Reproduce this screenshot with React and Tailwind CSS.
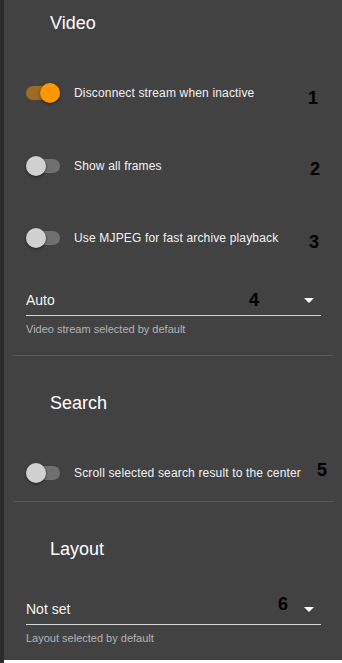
import React, { useState } from 'react';

const Toggle = ({ on, onClick }) => (
  <button
    type="button"
    onClick={onClick}
    className="relative w-[34px] h-[20px] shrink-0 flex items-center"
  >
    <span
      className={`block w-[34px] h-[14px] rounded-full ${on ? 'bg-[#9e6a24]' : 'bg-[#707070]'}`}
    />
    <span
      className={`absolute top-0 w-[20px] h-[20px] rounded-full shadow-[0_1px_3px_rgba(0,0,0,0.5)] ${
        on ? 'left-[14px] bg-[#ff9800]' : 'left-0 bg-[#d0d0d0]'
      }`}
    />
  </button>
);

const ToggleRow = ({ label, on, onClick, className }) => (
  <div className={`h-[40px] flex items-center pl-[12px] ${className}`}>
    <Toggle on={on} onClick={onClick} />
    <span className="ml-[14px] text-[12px] tracking-[0.16px] text-[#f2f2f2]">{label}</span>
  </div>
);

const SelectField = ({ value, helper, className }) => (
  <div className={`pl-[12px] pr-[12px] ${className}`}>
    <div className="h-[30px] flex items-center justify-between border-b border-[#d4d4d4]">
      <span className="text-[14px] text-[#f4f4f4]">{value}</span>
      <svg width="10" height="5" viewBox="0 0 10 5" className="mr-[7px]">
        <path d="M0 0h10L5 5z" fill="#ffffff" />
      </svg>
    </div>
    <div className="mt-[6px] h-[14px] leading-[14px] text-[11px] text-[#b4b4b4]">{helper}</div>
  </div>
);

const Title = ({ children, className }) => (
  <h2 className={`pl-[36px] h-[24px] leading-[24px] text-[18px] text-white ${className}`}>{children}</h2>
);

// black annotation numbers laid over the panel
const Num = ({ n, className }) => (
  <span className={`absolute text-[18px] leading-[18px] font-bold text-black ${className}`}>{n}</span>
);

export default function App() {
  const [toggles, setToggles] = useState([true, false, false, false]);
  const flip = (i) => setToggles((t) => t.map((v, j) => (j === i ? !v : v)));

  return (
    <div
      className="relative w-[342px] h-[663px] flex bg-[#2c2c2c] overflow-hidden"
      style={{ fontFamily: '"Liberation Sans", Arial, sans-serif' }}
    >
      <div className="w-[4px] shrink-0" />
      <div className="flex-1 flex flex-col">
        <div className="h-[660px] bg-[#424242] pl-[10px] pr-[9px]">
          <Title className="mt-[11px]">Video</Title>
          <ToggleRow className="mt-[38px]" label="Disconnect stream when inactive" on={toggles[0]} onClick={() => flip(0)} />
          <ToggleRow className="mt-[33px]" label="Show all frames" on={toggles[1]} onClick={() => flip(1)} />
          <ToggleRow className="mt-[32px]" label="Use MJPEG for fast archive playback" on={toggles[2]} onClick={() => flip(2)} />
          <SelectField className="mt-[28px]" value="Auto" helper="Video stream selected by default" />
          <div className="mt-[19px] h-px bg-[#585858]" />
          <Title className="mt-[35px]">Search</Title>
          <ToggleRow className="mt-[38px]" label="Scroll selected search result to the center" on={toggles[3]} onClick={() => flip(3)} />
          <div className="mt-[8px] h-px bg-[#585858]" />
          <Title className="mt-[35px]">Layout</Title>
          <SelectField className="mt-[34px]" value="Not set" helper="Layout selected by default" />
        </div>
        <div className="h-[3px] bg-white" />
      </div>

      <Num n="1" className="left-[308px] top-[89px]" />
      <Num n="2" className="left-[310px] top-[160px]" />
      <Num n="3" className="left-[309px] top-[233px]" />
      <Num n="4" className="left-[249px] top-[291px]" />
      <Num n="5" className="left-[317px] top-[461px]" />
      <Num n="6" className="left-[278px] top-[595px]" />
    </div>
  );
}
